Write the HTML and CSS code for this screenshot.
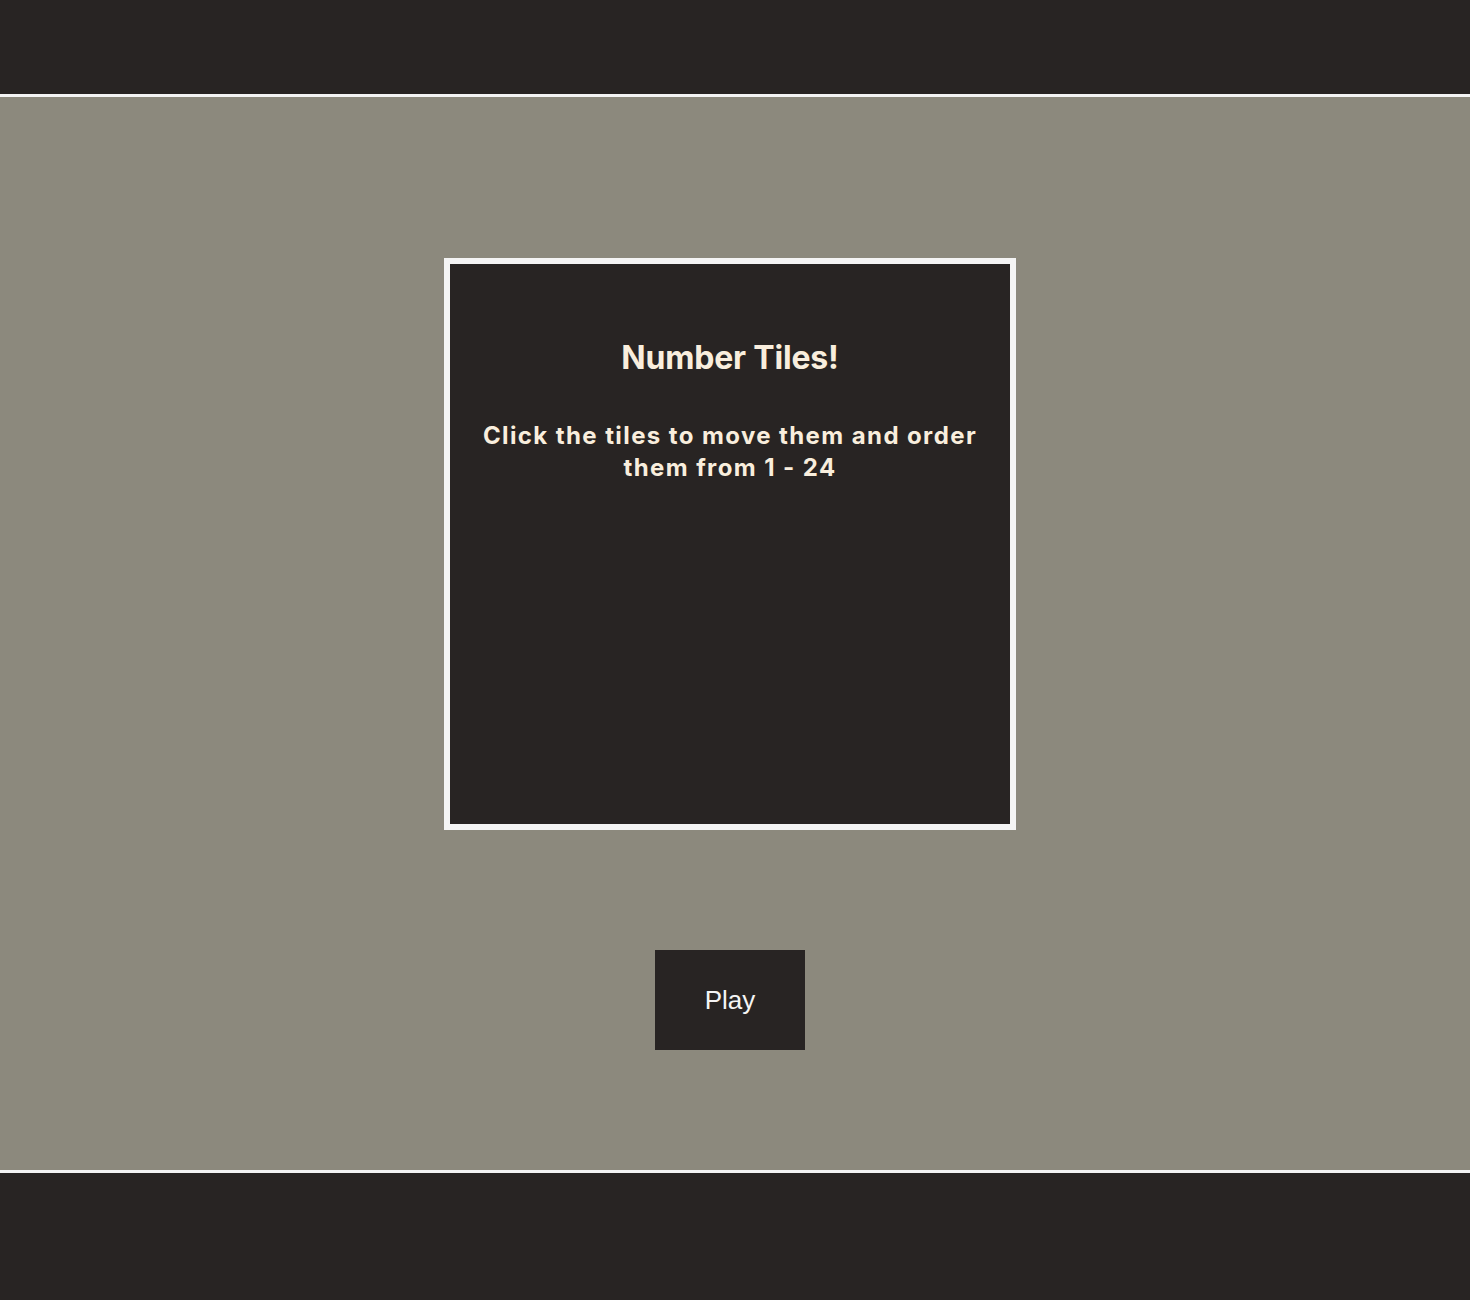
FILE: index.html
```html
<!DOCTYPE html>
<html lang="en">
<head>
<meta charset="utf-8">
<title>Number Tiles</title>
<link rel="stylesheet" href="styles.css">
</head>
<body>
<header class="top-bar"></header>
<main class="stage">
  <section class="board">
    <h1 class="board-title">Number Tiles!</h1>
    <p class="board-text">Click the tiles to move them and order them from 1 - 24</p>
  </section>
  <button class="play-btn" type="button">Play</button>
</main>
<footer class="bottom-bar"></footer>
</body>
</html>
```
FILE: styles.css
```css
* { box-sizing: border-box; }
html, body { margin: 0; padding: 0; }
body {
  background: #282423;
  font-family: Inter, "Noto Sans", sans-serif;
  height: 1300px;
  display: flex;
  flex-direction: column;
}
.top-bar {
  height: 97px;
  background: #282423;
  border-bottom: 3px solid #f4f4f4;
}
.stage {
  height: 1076px;
  background: #8c897d;
  border-bottom: 3px solid #f4f4f4;
  display: flex;
  flex-direction: column;
  align-items: center;
  padding: 161px 10px 0 0;
}
.bottom-bar {
  flex: 1;
  background: #282423;
}
.board {
  width: 572px;
  height: 572px;
  border: 6px solid #f4f4f4;
  background: #282423;
  color: #f9eedd;
  text-align: center;
  padding: 0 24px;
}
.board-title {
  margin: 74px 0 0;
  font-size: 32px;
  font-weight: 700;
  line-height: 39px;
  letter-spacing: -0.2px;
}
.board-text {
  margin: 43px 0 0;
  font-size: 24px;
  font-weight: 700;
  line-height: 32px;
  letter-spacing: 1.4px;
}
.play-btn {
  margin-top: 120px;
  width: 150px;
  height: 100px;
  border: none;
  background: #282423;
  color: #f4f4f4;
  font-family: "Liberation Sans", Arial, sans-serif;
  font-size: 26px;
  padding: 0;
}
```
